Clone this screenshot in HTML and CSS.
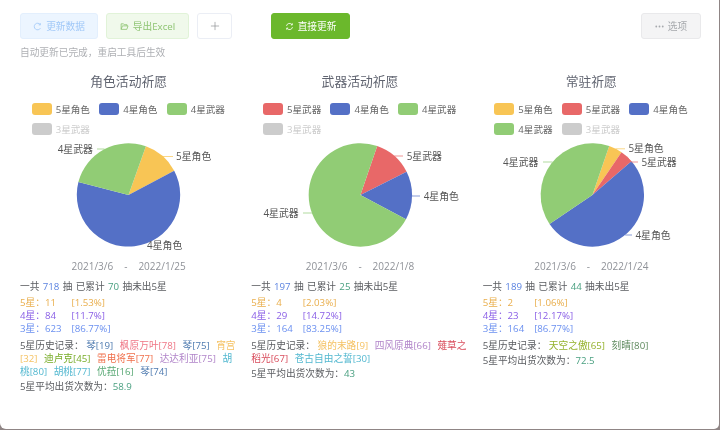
FILE: index.html
```html
<!DOCTYPE html>
<html lang="zh-CN">
<head>
<meta charset="utf-8">
<title>祈愿记录</title>
<link rel="stylesheet" href="styles.css">
</head>
<body>
<main class="app">
  <div class="toolbar">
    <button class="btn btn-blue" type="button">
      <svg class="ico" viewBox="0 0 12 12"><path d="M9.6 3.4A4.4 4.4 0 1 0 9.9 8.2"/><path d="M9.8 1.6v2.2H7.6"/></svg>更新数据
    </button>
    <button class="btn btn-lime" type="button">
      <svg class="ico" viewBox="0 0 12 12"><path d="M1.5 9.8V2.4h3.2l1 1.2h3.6v1.6"/><path d="M1.5 9.8h7.6l1.6-4.6H3.2z"/></svg>导出Excel
    </button>
    <button class="btn btn-plus" type="button">
      <svg class="ico-plus" viewBox="0 0 11 11"><path d="M5.5 1v9M1 5.5h9"/></svg>
    </button>
    <button class="btn btn-green" type="button">
      <svg class="ico" viewBox="0 0 12 12"><path d="M2 5.2A4.1 4.1 0 0 1 9.4 3.6"/><path d="M10 6.8A4.1 4.1 0 0 1 2.6 8.4"/><path d="M9.8 1.8v2.1H7.7"/><path d="M2.2 10.2V8.1h2.1"/></svg>直接更新
    </button>
    <button class="btn btn-gray" type="button">
      <svg class="ico-dots" viewBox="0 0 10 3"><circle cx="1.4" cy="1.5" r="1"/><circle cx="5" cy="1.5" r="1"/><circle cx="8.6" cy="1.5" r="1"/></svg>选项
    </button>
  </div>
  <p class="hint">自动更新已完成，重启工具后生效</p>

  <div class="columns">
    <section class="col">
      <h2 class="title">角色活动祈愿</h2>
      <div class="legend">
        <span class="lg"><i class="sw yellow"></i>5星角色</span>
        <span class="lg"><i class="sw blue"></i>4星角色</span>
        <span class="lg"><i class="sw green"></i>4星武器</span>
        <span class="lg off"><i class="sw gray"></i>3星武器</span>
      </div>
      <svg class="pie" viewBox="0 0 217 120">
        <path class="f-yellow" d="M108.5 57L125.9 8.3A51.7 51.7 0 0 1 154.2 32.7Z"/>
        <path class="f-blue" d="M108.5 57L154.2 32.7A51.7 51.7 0 1 1 58.4 44.1Z"/>
        <path class="f-green" d="M108.5 57L58.4 44.1A51.7 51.7 0 0 1 125.9 8.3Z"/>
        <path class="l-yellow" d="M142.4 18.5H153"/>
        <path class="l-green" d="M77 11H84.5"/>
        <text class="lbl" x="156" y="18">5星角色</text>
        <text class="lbl end" x="73" y="11">4星武器</text>
        <text class="lbl" x="127" y="107">4星角色</text>
      </svg>
      <div class="dates"><span>2021/3/6</span><span>-</span><span>2022/1/25</span></div>
      <p class="total">一共 <b class="c-blue">718</b> 抽 已累计 <b class="c-teal">70</b> 抽未出5星</p>
      <ul class="rates">
        <li class="r5"><span class="cnt">5星：11</span>[1.53%]</li>
        <li class="r4"><span class="cnt">4星：84</span>[11.7%]</li>
        <li class="r3"><span class="cnt">3星：623</span>[86.77%]</li>
      </ul>
      <p class="hist">5星历史记录： <span class="h h-steel">琴[19]</span> <span class="h h-pink">枫原万叶[78]</span> <span class="h h-steel">琴[75]</span> <span class="h-amber">宵宫</span><span class="h h-amber">[32]</span> <span class="h h-lime">迪卢克[45]</span> <span class="h h-coral">雷电将军[77]</span> <span class="h h-violet">达达利亚[75]</span> <span class="h-cyan">胡</span><span class="h h-cyan">桃[80]</span> <span class="h h-cyan">胡桃[77]</span> <span class="h h-moss">优菈[16]</span> <span class="h h-steel">琴[74]</span></p>
      <p class="avg">5星平均出货次数为：<b class="c-teal">58.9</b></p>
    </section>

    <section class="col">
      <h2 class="title">武器活动祈愿</h2>
      <div class="legend">
        <span class="lg"><i class="sw red"></i>5星武器</span>
        <span class="lg"><i class="sw blue"></i>4星角色</span>
        <span class="lg"><i class="sw green"></i>4星武器</span>
        <span class="lg off"><i class="sw gray"></i>3星武器</span>
      </div>
      <svg class="pie" viewBox="0 0 217 120">
        <path class="f-red" d="M109.4 57L126.2 8.1A51.7 51.7 0 0 1 155.6 33.8Z"/>
        <path class="f-blue" d="M109.4 57L155.6 33.8A51.7 51.7 0 0 1 155 81.3Z"/>
        <path class="f-green" d="M109.4 57L155 81.3A51.7 51.7 0 1 1 126.2 8.1Z"/>
        <path class="l-red" d="M143.3 18H152"/>
        <path class="l-blue" d="M161 58H169"/>
        <path class="l-green" d="M52 75H60.9"/>
        <text class="lbl" x="155.7" y="18">5星武器</text>
        <text class="lbl" x="172.7" y="58">4星角色</text>
        <text class="lbl end" x="47.7" y="75">4星武器</text>
      </svg>
      <div class="dates"><span>2021/3/6</span><span>-</span><span>2022/1/8</span></div>
      <p class="total">一共 <b class="c-blue">197</b> 抽 已累计 <b class="c-teal">25</b> 抽未出5星</p>
      <ul class="rates">
        <li class="r5"><span class="cnt">5星：4</span>[2.03%]</li>
        <li class="r4"><span class="cnt">4星：29</span>[14.72%]</li>
        <li class="r3"><span class="cnt">3星：164</span>[83.25%]</li>
      </ul>
      <p class="hist">5星历史记录： <span class="h h-amber">狼的末路[9]</span> <span class="h h-violet">四风原典[66]</span> <span class="h-crimson">薙草之</span><span class="h h-crimson">稻光[67]</span> <span class="h h-cyan">苍古自由之誓[30]</span></p>
      <p class="avg">5星平均出货次数为：<b class="c-teal">43</b></p>
    </section>

    <section class="col">
      <h2 class="title">常驻祈愿</h2>
      <div class="legend">
        <span class="lg"><i class="sw yellow"></i>5星角色</span>
        <span class="lg"><i class="sw red"></i>5星武器</span>
        <span class="lg"><i class="sw blue"></i>4星角色</span>
        <span class="lg"><i class="sw green"></i>4星武器</span>
        <span class="lg off"><i class="sw gray"></i>3星武器</span>
      </div>
      <svg class="pie" viewBox="0 0 217 120">
        <path class="f-yellow" d="M109.4 57L126.2 8.1A51.7 51.7 0 0 1 138.5 14.3Z"/>
        <path class="f-red" d="M109.4 57L138.5 14.3A51.7 51.7 0 0 1 148.5 23.2Z"/>
        <path class="f-blue" d="M109.4 57L148.5 23.2A51.7 51.7 0 1 1 66.5 85.9Z"/>
        <path class="f-green" d="M109.4 57L66.5 85.9A51.7 51.7 0 0 1 126.2 8.1Z"/>
        <path class="l-yellow" d="M132.6 10.8H142"/>
        <path class="l-red" d="M143.8 18.4L148 24H155"/>
        <path class="l-blue" d="M142.2 97H149"/>
        <path class="l-green" d="M60 24H69.6"/>
        <text class="lbl" x="145.4" y="10">5星角色</text>
        <text class="lbl" x="158.4" y="24">5星武器</text>
        <text class="lbl" x="152.4" y="97">4星角色</text>
        <text class="lbl end" x="55.4" y="24">4星武器</text>
      </svg>
      <div class="dates"><span>2021/3/6</span><span>-</span><span>2022/1/24</span></div>
      <p class="total">一共 <b class="c-blue">189</b> 抽 已累计 <b class="c-teal">44</b> 抽未出5星</p>
      <ul class="rates">
        <li class="r5"><span class="cnt">5星：2</span>[1.06%]</li>
        <li class="r4"><span class="cnt">4星：23</span>[12.17%]</li>
        <li class="r3"><span class="cnt">3星：164</span>[86.77%]</li>
      </ul>
      <p class="hist">5星历史记录： <span class="h h-olive">天空之傲[65]</span> <span class="h h-forest">刻晴[80]</span></p>
      <p class="avg">5星平均出货次数为：<b class="c-teal">72.5</b></p>
    </section>
  </div>
</main>
</body>
</html>
```
FILE: styles.css
```css
* { box-sizing: border-box; }
html, body { margin: 0; padding: 0; height: 100%; overflow: hidden; }
body {
  width: 720px;
  height: 430px;
  background: #8f8585;
  font-family: "Open Sans", "Noto Sans CJK SC", sans-serif;
  font-size: 9.7px;
  line-height: 13px;
  color: #5a5c60;
}
.app {
  width: 718.5px;
  height: 429px;
  padding: 13px 17.5px 0 20px;
  background: #fff;
  border-radius: 0 0 5px 6px;
  filter: blur(0.3px);
}
.toolbar { display: flex; gap: 8px; height: 26px; }
.btn {
  display: flex;
  align-items: center;
  justify-content: center;
  gap: 4px;
  height: 26px;
  padding: 0;
  border: 1px solid transparent;
  border-radius: 3px;
  font: inherit;
}
.btn-blue { width: 78px; background: #ecf5ff; border-color: #e3effd; color: #a0c8f8; }
.btn-lime { width: 83px; background: #f0f9eb; border-color: #e1f3d8; color: #8ec472; }
.btn-plus { width: 35px; background: #fff; border-color: #ebeef5; color: #909399; }
.btn-green { width: 79px; margin-left: 31px; background: #6bb82c; border-color: #6bb82c; color: #fff; }
.btn-gray { width: 60px; margin-left: auto; background: #f4f4f5; border-color: #e9e9eb; color: #a6a9ad; }
.ico { width: 9px; height: 9px; fill: none; stroke: currentColor; stroke-width: 1.1; }
.ico-plus { width: 10px; height: 10px; fill: none; stroke: #85888c; stroke-width: 0.7; }
.ico-dots { width: 9px; height: 3px; fill: #a6a9ad; }
.hint { margin: 7px 0 0; color: #aeb0b4; }

.columns { display: flex; margin: 13px -6px 0 -7px; }
.col { flex: 1 1 0; min-width: 0; padding: 0 7px; }
.title {
  margin: 0;
  font-size: 12.8px;
  line-height: 18px;
  font-weight: 400;
  text-align: center;
  color: #606470;
}
.legend {
  display: grid;
  grid-template-columns: 67.5px 67.5px 59px;
  row-gap: 8px;
  width: 194px;
  margin: 13px auto 0;
}
.lg { display: flex; align-items: center; gap: 4px; height: 12px; white-space: nowrap; font-size: 9.6px; color: #666; }
.lg.off { color: #ccc; }
.sw { flex: none; width: 20px; height: 12px; border-radius: 3px; }
.yellow { background: #f8c555; }
.blue { background: #5470c6; }
.green { background: #91cc75; }
.red { background: #e86868; }
.gray { background: #ccc; }

.pie { display: block; width: 217px; height: 120px; margin-top: 3px; overflow: visible; }
.f-yellow { fill: #f8c555; }
.f-blue { fill: #5470c6; }
.f-green { fill: #91cc75; }
.f-red { fill: #e86868; }
.l-yellow, .l-blue, .l-green, .l-red { fill: none; stroke-width: 0.7; }
.l-yellow { stroke: #f8c555; }
.l-blue { stroke: #5470c6; }
.l-green { stroke: #91cc75; }
.l-red { stroke: #e86868; }
.lbl { font-size: 9.9px; fill: #555; dominant-baseline: central; }
.end { text-anchor: end; }

.dates { display: flex; justify-content: center; gap: 11px; margin-top: 2px; font-size: 10px; color: #8f9298; }
.total, .hist, .avg { margin: 0; }
.total { margin-top: 7px; word-spacing: 0.8px; }
b { font-weight: 400; }
.c-blue { color: #5b83e0; }
.c-teal { color: #4aa081; }
.rates { list-style: none; margin: 3px 0 0; padding: 0; }
.cnt { display: inline-block; width: 51.5px; }
.r5 { color: #e9ae4c; }
.r4 { color: #8a5fe6; }
.r3 { color: #6b90f0; }
.hist { margin-top: 4px; }
.h { margin-right: 4px; }
.avg { margin-top: 2px; }
.h-steel { color: #4f7bb0; }
.h-pink { color: #ef7585; }
.h-amber { color: #f5c263; }
.h-lime { color: #78ac28; }
.h-coral { color: #f0704c; }
.h-violet { color: #b184c9; }
.h-cyan { color: #53b8d0; }
.h-moss { color: #58a874; }
.h-crimson { color: #d94c5c; }
.h-olive { color: #94b22c; }
.h-forest { color: #5f8a5e; }
```
